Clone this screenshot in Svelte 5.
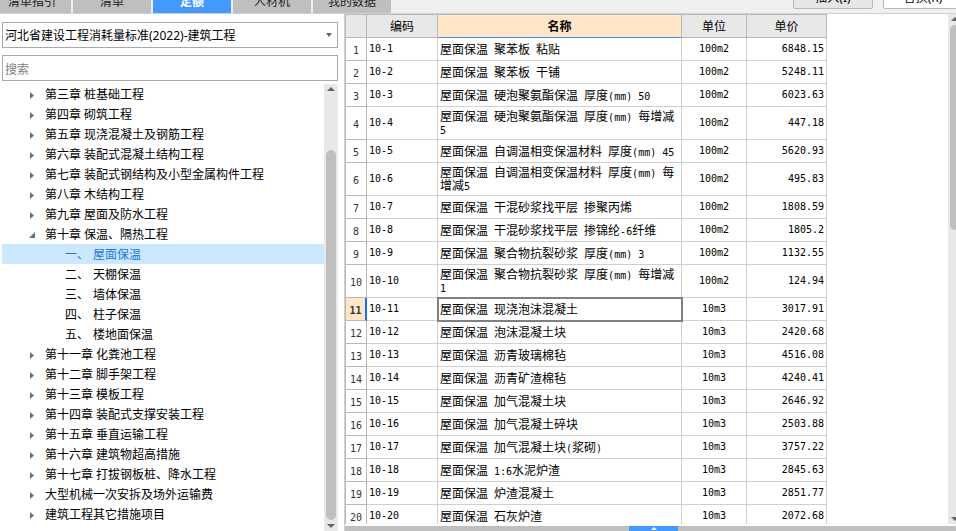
<script>
  let standard = $state('2022-jz');
  let query = $state('');
  let activeTab = $state('定额');
  let selectedNode = $state('屋面保温');
  let selectedRow = $state(11);

  const tabs = ['清单指引', '清单', '定额', '人材机', '我的数据'];

  const chapters = [
    { title: '第三章 桩基础工程' },
    { title: '第四章 砌筑工程' },
    { title: '第五章 现浇混凝土及钢筋工程' },
    { title: '第六章 装配式混凝土结构工程' },
    { title: '第七章 装配式钢结构及小型金属构件工程' },
    { title: '第八章 木结构工程' },
    { title: '第九章 屋面及防水工程' },
    {
      title: '第十章 保温、隔热工程',
      children: [
        { no: '一、', title: '屋面保温' },
        { no: '二、', title: '天棚保温' },
        { no: '三、', title: '墙体保温' },
        { no: '四、', title: '柱子保温' },
        { no: '五、', title: '楼地面保温' }
      ]
    },
    { title: '第十一章 化粪池工程' },
    { title: '第十二章 脚手架工程' },
    { title: '第十三章 模板工程' },
    { title: '第十四章 装配式支撑安装工程' },
    { title: '第十五章 垂直运输工程' },
    { title: '第十六章 建筑物超高措施' },
    { title: '第十七章 打拔钢板桩、降水工程' },
    { title: '大型机械一次安拆及场外运输费' },
    { title: '建筑工程其它措施项目' }
  ];

  const rows = [
    ['聚苯板 粘贴', '100m2', '6848.15'],
    ['聚苯板 干铺', '100m2', '5248.11'],
    ['硬泡聚氨酯保温 厚度(mm) 50', '100m2', '6023.63'],
    ['硬泡聚氨酯保温 厚度(mm) 每增减5', '100m2', '447.18'],
    ['自调温相变保温材料 厚度(mm) 45', '100m2', '5620.93'],
    ['自调温相变保温材料 厚度(mm) 每增减5', '100m2', '495.83'],
    ['干混砂浆找平层 掺聚丙烯', '100m2', '1808.59'],
    ['干混砂浆找平层 掺锦纶-6纤维', '100m2', '1805.2'],
    ['聚合物抗裂砂浆 厚度(mm) 3', '100m2', '1132.55'],
    ['聚合物抗裂砂浆 厚度(mm) 每增减1', '100m2', '124.94'],
    ['现浇泡沫混凝土', '10m3', '3017.91'],
    ['泡沫混凝土块', '10m3', '2420.68'],
    ['沥青玻璃棉毡', '10m3', '4516.08'],
    ['沥青矿渣棉毡', '10m3', '4240.41'],
    ['加气混凝土块', '10m3', '2646.92'],
    ['加气混凝土碎块', '10m3', '2503.88'],
    ['加气混凝土块(浆砌)', '10m3', '3757.22'],
    ['1:6水泥炉渣', '10m3', '2845.63'],
    ['炉渣混凝土', '10m3', '2851.77'],
    ['石灰炉渣', '10m3', '2072.68']
  ].map(([name, unit, price], i) => ({
    no: i + 1,
    code: `10-${i + 1}`,
    name: `屋面保温 ${name}`,
    unit,
    price
  }));

  // half-width characters take exactly half a Chinese character
  function runs(text) {
    return text.match(/[\x20-\x7e]+|[^\x20-\x7e]+/g).map((t) => ({ t, half: t.charCodeAt(0) < 127 }));
  }
</script>

{#snippet arrow(dir)}
  <svg class="arrow" width="8" height="4" viewBox="0 0 8 4" aria-hidden="true">
    {#if dir === 'up'}
      <path d="M0 4 L4 0 L8 4 Z" />
    {:else}
      <path d="M0 0 L8 0 L4 4 Z" />
    {/if}
  </svg>
{/snippet}

<div class="window">
  <header>
    <nav class="tabs">
      {#each tabs as tab}
        <button class="tab" class:active={tab === activeTab} onclick={() => (activeTab = tab)}>{tab}</button>
      {/each}
    </nav>
    <div class="actions">
      <button class="action muted">插入(I)</button>
      <button class="action">替换(R)</button>
    </div>
  </header>

  <div class="body">
    <aside>
      <div class="field">
        <select aria-label="定额标准" bind:value={standard}>
          <option value="2022-jz">河北省建设工程消耗量标准(2022)-建筑工程</option>
        </select>
        <svg class="caret" width="6" height="4" viewBox="0 0 6 4" aria-hidden="true"><path d="M0 0 H6 L3 4 Z" /></svg>
      </div>
      <input class="search" type="text" aria-label="搜索" placeholder="搜索" bind:value={query} />

      <div class="tree-wrap">
        <ul class="tree">
          {#each chapters as chapter}
            <li>
              <button class="node">
                <span class="toggle">
                  {#if chapter.children}
                    <svg width="6" height="6" viewBox="0 0 6 6" aria-hidden="true"><path d="M6 0 V6 H0 Z" /></svg>
                  {:else}
                    <svg width="4" height="7" viewBox="0 0 4 7" aria-hidden="true"><path d="M0 0 L4 3.5 L0 7 Z" /></svg>
                  {/if}
                </span>
                {chapter.title}
              </button>
              {#if chapter.children}
                <ul>
                  {#each chapter.children as child}
                    <li>
                      <button
                        class="node leaf"
                        class:selected={child.title === selectedNode}
                        onclick={() => (selectedNode = child.title)}
                      >
                        <span>{child.no}</span>
                        <span>{child.title}</span>
                      </button>
                    </li>
                  {/each}
                </ul>
              {/if}
            </li>
          {/each}
        </ul>
        <div class="scrollbar">
          {@render arrow('up')}
          <div class="track tree-track"><div class="thumb"></div></div>
          {@render arrow('down')}
        </div>
      </div>
    </aside>

    <main>
      <div class="grid-wrap">
        <div class="grid-area">
          <table>
            <colgroup>
              <col class="c-no" />
              <col class="c-code" />
              <col class="c-name" />
              <col class="c-unit" />
              <col class="c-price" />
            </colgroup>
            <thead>
              <tr>
                <th></th>
                <th>编码</th>
                <th class="current">名称</th>
                <th>单位</th>
                <th>单价</th>
              </tr>
            </thead>
            <tbody>
              {#each rows as row (row.no)}
                <tr class:picked={row.no === selectedRow} onclick={() => (selectedRow = row.no)}>
                  <td class="no half">{row.no}</td>
                  <td class="half">{row.code}</td>
                  <td class="name">{#each runs(row.name) as run}<span class:half={run.half}>{run.t}</span>{/each}</td>
                  <td class="unit half">{row.unit}</td>
                  <td class="price half">{row.price}</td>
                </tr>
              {/each}
            </tbody>
          </table>
        </div>
        <div class="scrollbar grid-scroll">
          {@render arrow('up')}
          <div class="track grid-track"><div class="thumb"></div></div>
          {@render arrow('down')}
        </div>
      </div>
      <footer>
        <button class="expand" aria-label="展开">
          <svg width="6" height="3" viewBox="0 0 6 3" aria-hidden="true"><path d="M0 3 L3 0 L6 3 Z" /></svg>
        </button>
      </footer>
    </main>
  </div>
</div>

<style>
  :global(body) {
    margin: 0;
    background: #fff;
  }

  .window {
    display: flex;
    flex-direction: column;
    height: 100vh;
    overflow: hidden;
    color: #000;
    font: 12px/20px 'Noto Sans', 'Noto Sans CJK SC', sans-serif;
  }

  button,
  select,
  input {
    font: inherit;
    color: inherit;
    box-sizing: border-box;
    margin: 0;
    border-radius: 0;
  }

  ul {
    list-style: none;
    margin: 0;
    padding: 0;
  }

  /* top bar */
  header {
    display: flex;
    justify-content: space-between;
    align-items: flex-end;
    flex: none;
    height: 13px;
    background: #f0f0f0;
    border-bottom: 1px solid #d0d0d0;
  }

  .tabs {
    display: flex;
    gap: 2px;
    margin-left: -7px;
  }

  .tab {
    width: 78px;
    height: 26px;
    padding: 3px 0 0;
    border: 0;
    background: #bfbfbf;
    color: #222;
  }

  .tab.active {
    background: #4499ff;
    color: #fff;
    font-weight: bold;
  }

  .actions {
    display: flex;
    gap: 10px;
    margin-right: -7px;
    padding-bottom: 4px;
  }

  .action {
    width: 80px;
    height: 24px;
    padding: 2px 0 0;
    border: 1px solid #b8b8b8;
    border-radius: 2px;
    background: #fff;
  }

  .action.muted {
    background: #e6e6e6;
  }

  .body {
    display: flex;
    flex: 1;
    min-height: 0;
  }

  /* left panel */
  aside {
    display: flex;
    flex-direction: column;
    flex: none;
    box-sizing: border-box;
    width: 345px;
    padding: 8px 6px 0 2px;
    border-right: 1px solid #d0d0d0;
  }

  .field {
    display: flex;
    align-items: center;
    margin-bottom: 7px;
    border: 1px solid #a9a9a9;
  }

  select {
    appearance: none;
    flex: 1;
    height: 24px;
    padding: 2px 2px 0;
    border: 0;
    background: none;
    outline: none;
  }

  .caret {
    margin: 0 5px;
    fill: #666;
  }

  .search {
    flex: none;
    height: 26px;
    padding: 2px 2px 0;
    border: 1px solid #a9a9a9;
    outline: none;
  }

  .search::placeholder {
    color: #808080;
    opacity: 1;
  }

  .tree-wrap {
    display: flex;
    flex: 1;
    min-height: 0;
    margin-top: 3px;
  }

  .tree {
    flex: 1;
    overflow: hidden;
  }

  .node {
    display: flex;
    align-items: center;
    width: 100%;
    height: 20px;
    padding: 2px 0 0 24px;
    border: 0;
    background: none;
    text-align: left;
    white-space: nowrap;
  }

  .toggle {
    display: flex;
    justify-content: center;
    width: 11px;
    margin-right: 8px;
    fill: #707070;
  }

  .leaf {
    gap: 4px;
    padding-left: 63px;
  }

  .leaf.selected {
    background: #cce8ff;
    color: #1878e0;
  }

  /* scrollbars */
  .scrollbar {
    display: flex;
    flex-direction: column;
    align-items: center;
    flex: none;
    box-sizing: border-box;
    width: 14px;
    padding: 3px 0;
    background: #e8e8e8;
  }

  .arrow {
    flex: none;
    fill: #666;
  }

  .track {
    display: flex;
    flex-direction: column;
    flex: 1;
    width: 10px;
    margin: 4px 0;
  }

  .thumb {
    border-radius: 5px;
    background: #bfbfbf;
  }

  .tree-track .thumb {
    height: 87%;
    margin-top: auto;
  }

  .grid-track .thumb {
    height: 42%;
  }

  /* price table */
  main {
    display: flex;
    flex-direction: column;
    flex: 1;
    min-width: 0;
    margin-right: -6px;
  }

  .grid-wrap {
    display: flex;
    flex: 1;
    min-height: 0;
    margin-bottom: 2px;
  }

  .grid-area {
    flex: 1;
    overflow: hidden;
  }

  table {
    table-layout: fixed;
    width: 482px;
    border-collapse: separate;
    border-spacing: 0;
    border: 0 solid #b9b9b9;
    border-width: 1px 0 0 1px;
    line-height: 13px;
  }

  .c-no { width: 21px; }
  .c-code { width: 71px; }
  .c-name { width: 244px; }
  .c-unit { width: 65px; }
  .c-price { width: 80px; }

  th,
  td {
    box-sizing: border-box;
    height: 23px;
    padding: 2px 2px 4px;
    border: 0 solid #d0d0d0;
    border-width: 0 1px 1px 0;
    text-align: left;
  }

  th {
    padding: 3px 0;
    border-color: #b9b9b9;
    background: #e8e8e8;
    font-weight: normal;
    text-align: center;
  }

  th.current {
    border-bottom-color: #4090f0;
    background: #ffe6c8;
    font-weight: bold;
  }

  .half {
    font-family: 'DejaVu Sans Mono', monospace;
    font-size: 10px;
  }

  .name {
    padding: 3px 2px;
  }

  .name .half {
    line-height: 8px;
  }

  .no {
    padding: 4px 0 2px;
    border-color: #b9b9b9;
    color: #333;
    text-align: center;
  }

  .unit {
    text-align: center;
  }

  .price {
    text-align: right;
  }

  .picked .no {
    border-right: 2px solid #1070ff;
    background: #ffe6c8;
    font-weight: bold;
  }

  .picked .name {
    outline: 2px solid #808080;
    outline-offset: -1px;
  }

  footer {
    display: flex;
    justify-content: center;
    flex: none;
    height: 5px;
    background: #bfbfbf;
  }

  .expand {
    display: flex;
    align-items: center;
    justify-content: center;
    width: 49px;
    height: 5px;
    padding: 0;
    border: 0;
    background: #4499ff;
  }

  .expand svg {
    fill: #fff;
  }
</style>
